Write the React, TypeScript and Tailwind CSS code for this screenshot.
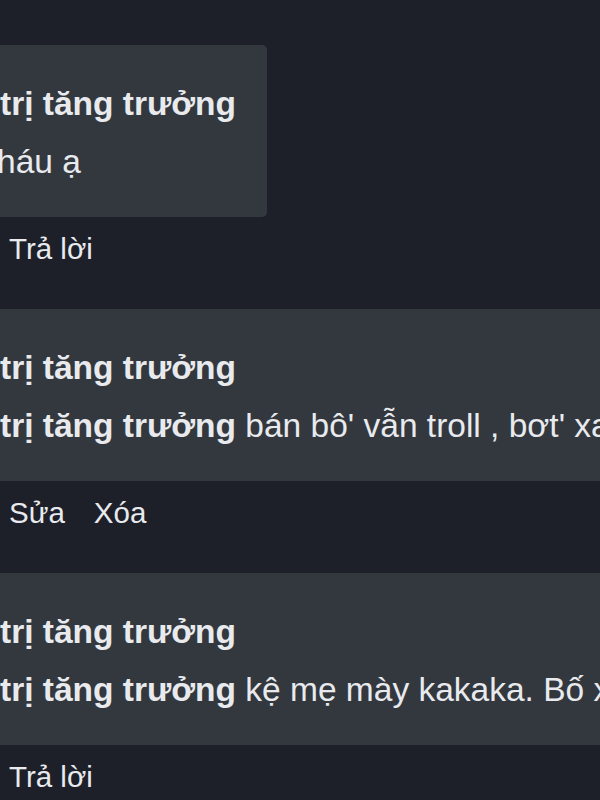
import React from "react";

function Card({ children, fit }: { children: React.ReactNode; fit?: boolean }) {
  return (
    <div
      className={
        "bg-[#33383f] rounded-r-[5px] pt-[30px] pb-[26px] whitespace-nowrap " +
        (fit ? "w-max pr-[31px]" : "w-max pr-[40px]")
      }
    >
      {children}
    </div>
  );
}

function Actions({ children }: { children: React.ReactNode }) {
  return (
    <div className="h-[92px] pt-[12px] pl-[9px] flex gap-[29px] text-[29.5px] leading-[40px] text-[#e8eaed]">
      {children}
    </div>
  );
}

export default function App() {
  return (
    <div
      className="w-[600px] h-[800px] overflow-hidden bg-[#1d2029] text-[#e8eaed] pt-[45px]"
      style={{ fontFamily: '"Liberation Sans", Arial, sans-serif' }}
    >
      <Card fit>
        <div className="text-[33.5px] leading-[58px] font-bold">trị tăng trưởng</div>
        <div className="text-[33.5px] leading-[58px] -ml-[3px]">háu ạ</div>
      </Card>
      <Actions>
        <span>Trả lời</span>
      </Actions>

      <Card>
        <div className="text-[33.5px] leading-[58px] font-bold">trị tăng trưởng</div>
        <div className="text-[33.5px] leading-[58px]">
          <span className="font-bold">trị tăng trưởng</span> bán bô' vẫn troll , bơt' xao' đi
        </div>
      </Card>
      <Actions>
        <span>Sửa</span>
        <span>Xóa</span>
      </Actions>

      <Card>
        <div className="text-[33.5px] leading-[58px] font-bold">trị tăng trưởng</div>
        <div className="text-[33.5px] leading-[58px]">
          <span className="font-bold">trị tăng trưởng</span> kệ mẹ mày kakaka. Bố xem
        </div>
      </Card>
      <Actions>
        <span>Trả lời</span>
      </Actions>
    </div>
  );
}
